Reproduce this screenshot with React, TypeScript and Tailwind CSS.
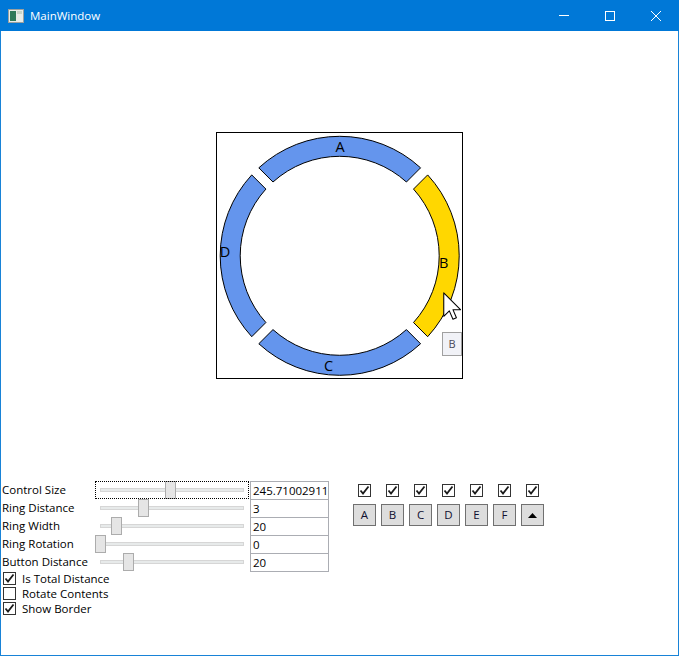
import React from 'react'

const font = { fontFamily: '"Segoe UI", "Open Sans", "Noto Sans", sans-serif' }

interface SliderRow {
  label: string
  thumb: string
  value: string
  focused?: boolean
}

const sliderRows: SliderRow[] = [
  { label: 'Control Size', thumb: 'left-[70px]', value: '245.710029118', focused: true },
  { label: 'Ring Distance', thumb: 'left-[43px]', value: '3' },
  { label: 'Ring Width', thumb: 'left-[16px]', value: '20' },
  { label: 'Ring Rotation', thumb: 'left-[0px]', value: '0' },
  { label: 'Button Distance', thumb: 'left-[28px]', value: '20' },
]

const options = [
  { label: 'Is Total Distance', checked: true },
  { label: 'Rotate Contents', checked: false },
  { label: 'Show Border', checked: true },
]

const buttons = ['A', 'B', 'C', 'D', 'E', 'F']

// ring segment with parallel cut edges (gap stays same width at every radius)
function segmentPath(centerDeg: number) {
  const cx = 122.7
  const cy = 122.8
  const R = 119.5
  const r = 99.5
  const h = 5
  const c = (centerDeg * Math.PI) / 180
  const ao = Math.asin(h / R)
  const ai = Math.asin(h / r)
  const s = c - Math.PI / 4
  const e = c + Math.PI / 4
  const pt = (rad: number, a: number) => `${(cx + rad * Math.cos(a)).toFixed(2)} ${(cy + rad * Math.sin(a)).toFixed(2)}`
  return `M ${pt(R, s + ao)} A ${R} ${R} 0 0 1 ${pt(R, e - ao)} L ${pt(r, e - ai)} A ${r} ${r} 0 0 0 ${pt(r, s + ai)} Z`
}

const segments = [
  { name: 'A', deg: -90, fill: '#6495ED', tx: 123, ty: 19.2 },
  { name: 'B', deg: 0, fill: '#FFD700', tx: 226.7, ty: 135.2 },
  { name: 'C', deg: 90, fill: '#6495ED', tx: 111.5, ty: 238.2 },
  { name: 'D', deg: 180, fill: '#6495ED', tx: 8, ty: 124.2 },
]

function CheckMark() {
  return (
    <svg width="11" height="11" viewBox="0 0 11 11">
      <path d="M1.5 5.5 L4 8.5 L9.5 1.5" fill="none" stroke="#1a1a1a" strokeWidth="1.8" />
    </svg>
  )
}

function CheckBox({ checked }: { checked: boolean }) {
  return (
    <div className="w-[13px] h-[13px] border border-[#333333] bg-white flex items-center justify-center shrink-0">
      {checked && <CheckMark />}
    </div>
  )
}

function RingControl() {
  return (
    <div className="relative w-[247px] h-[247px] border border-black mx-auto mt-[101px] shrink-0">
      <svg width="245" height="245" viewBox="0 0 245 245" className="block">
        {segments.map((seg) => (
          <path key={seg.name} d={segmentPath(seg.deg)} fill={seg.fill} stroke="#000" strokeWidth="1" />
        ))}
        {segments.map((seg) => (
          <text
            key={seg.name + 't'}
            x={seg.tx}
            y={seg.ty}
            textAnchor="middle"
            fontSize="14.5"
            fill="#000"
            style={font}
          >
            {seg.name}
          </text>
        ))}
      </svg>

      {/* mouse cursor */}
      <svg
        width="19"
        height="29"
        viewBox="0 0 12.6 19"
        className="absolute left-[226px] top-[159px]"
      >
        <path
          d="M0.5 0.5 L0.5 16 L4.2 12.4 L6.6 18 L8.9 17 L6.6 11.6 L11.6 11.6 Z"
          fill="#fff"
          stroke="#000"
          strokeWidth="0.7"
          strokeLinejoin="round"
        />
      </svg>

      {/* tooltip */}
      <div className="absolute left-[225px] top-[199px] w-[20px] h-[24px] bg-[#f1f2f7] border border-[#a0a0a0] flex items-center justify-center text-[11px] text-[#4a4a5a]" style={font}>
        B
      </div>
    </div>
  )
}

export default function App() {
  return (
    <div className="w-[679px] h-[656px] flex flex-col bg-white overflow-hidden" style={font}>
      {/* Title bar */}
      <div className="h-[31px] bg-[#0078d7] flex items-center shrink-0 text-white">
        <svg width="16" height="14" viewBox="0 0 16 14" className="ml-[8px]">
          <rect x="0.5" y="0.5" width="15" height="13" fill="#e8ece8" stroke="#9aa0a0" />
          <rect x="2" y="2" width="6" height="10" fill="#2f7a5a" />
          <rect x="9" y="2" width="5" height="3" fill="#c8d4c8" />
        </svg>
        <span className="ml-[6px] text-[11.5px]">MainWindow</span>
        <div className="ml-auto flex h-full">
          <div className="w-[46px] h-full flex items-center justify-center">
            <div className="w-[10px] h-px bg-white" />
          </div>
          <div className="w-[46px] h-full flex items-center justify-center">
            <div className="w-[10px] h-[10px] border border-white" />
          </div>
          <div className="w-[46px] h-full flex items-center justify-center">
            <svg width="10" height="10" viewBox="0 0 10 10">
              <path d="M0 0 L10 10 M10 0 L0 10" stroke="#fff" strokeWidth="1" />
            </svg>
          </div>
        </div>
      </div>

      {/* Client area */}
      <div className="flex-1 flex flex-col border-x border-b border-[#1883d7] text-black">
        <RingControl />

        <div className="flex items-start mt-[102px]">
          {/* Settings */}
          <div className="w-[328px] flex flex-col">
            {sliderRows.map((row) => (
              <div key={row.label} className="h-[18px] flex items-start">
                <div className="w-[94px] h-[18px] pl-[1px] flex items-center text-[11.5px] whitespace-nowrap">{row.label}</div>
                <div className="relative w-[154px] h-[18px]">
                  <div className="absolute left-[5px] right-[5px] top-[7px] h-[4px] bg-[#e7eaea] border border-[#d6d6d6]" />
                  <div className={`absolute top-0 ${row.thumb} w-[11px] h-[18px] bg-[#e5e5e5] border border-[#acacac]`} />
                  {row.focused && <div className="absolute inset-0 border border-dotted border-black" />}
                </div>
                <div className="ml-px w-[79px] h-[19px] border border-[#abadb3] bg-white px-[2px] flex items-center text-[11.5px] overflow-hidden whitespace-nowrap">
                  {row.value}
                </div>
              </div>
            ))}
            <div className="flex flex-col">
              {options.map((opt) => (
                <div key={opt.label} className="h-[15px] flex items-center">
                  <div className="ml-[2px]">
                    <CheckBox checked={opt.checked} />
                  </div>
                  <span className="ml-[6px] text-[11.5px] whitespace-nowrap">{opt.label}</span>
                </div>
              ))}
            </div>
          </div>

          {/* Segment toggles */}
          <div className="ml-[24px] mt-[3px] grid grid-cols-7 gap-x-[5px] gap-y-[7px]">
            {buttons.map((b) => (
              <div key={b + 'c'} className="flex justify-center">
                <CheckBox checked />
              </div>
            ))}
            <div className="flex justify-center">
              <CheckBox checked />
            </div>
            {buttons.map((b) => (
              <div
                key={b}
                className="w-[23px] h-[22px] bg-[#dddddd] border border-[#707070] flex items-center justify-center text-[11.5px] text-[#101030]"
              >
                {b}
              </div>
            ))}
            <div className="w-[23px] h-[22px] bg-[#dddddd] border border-[#707070] flex items-center justify-center">
              <svg width="9" height="5" viewBox="0 0 9 5">
                <path d="M0 5 L4.5 0 L9 5 Z" fill="#000" />
              </svg>
            </div>
          </div>
        </div>
      </div>
    </div>
  )
}
